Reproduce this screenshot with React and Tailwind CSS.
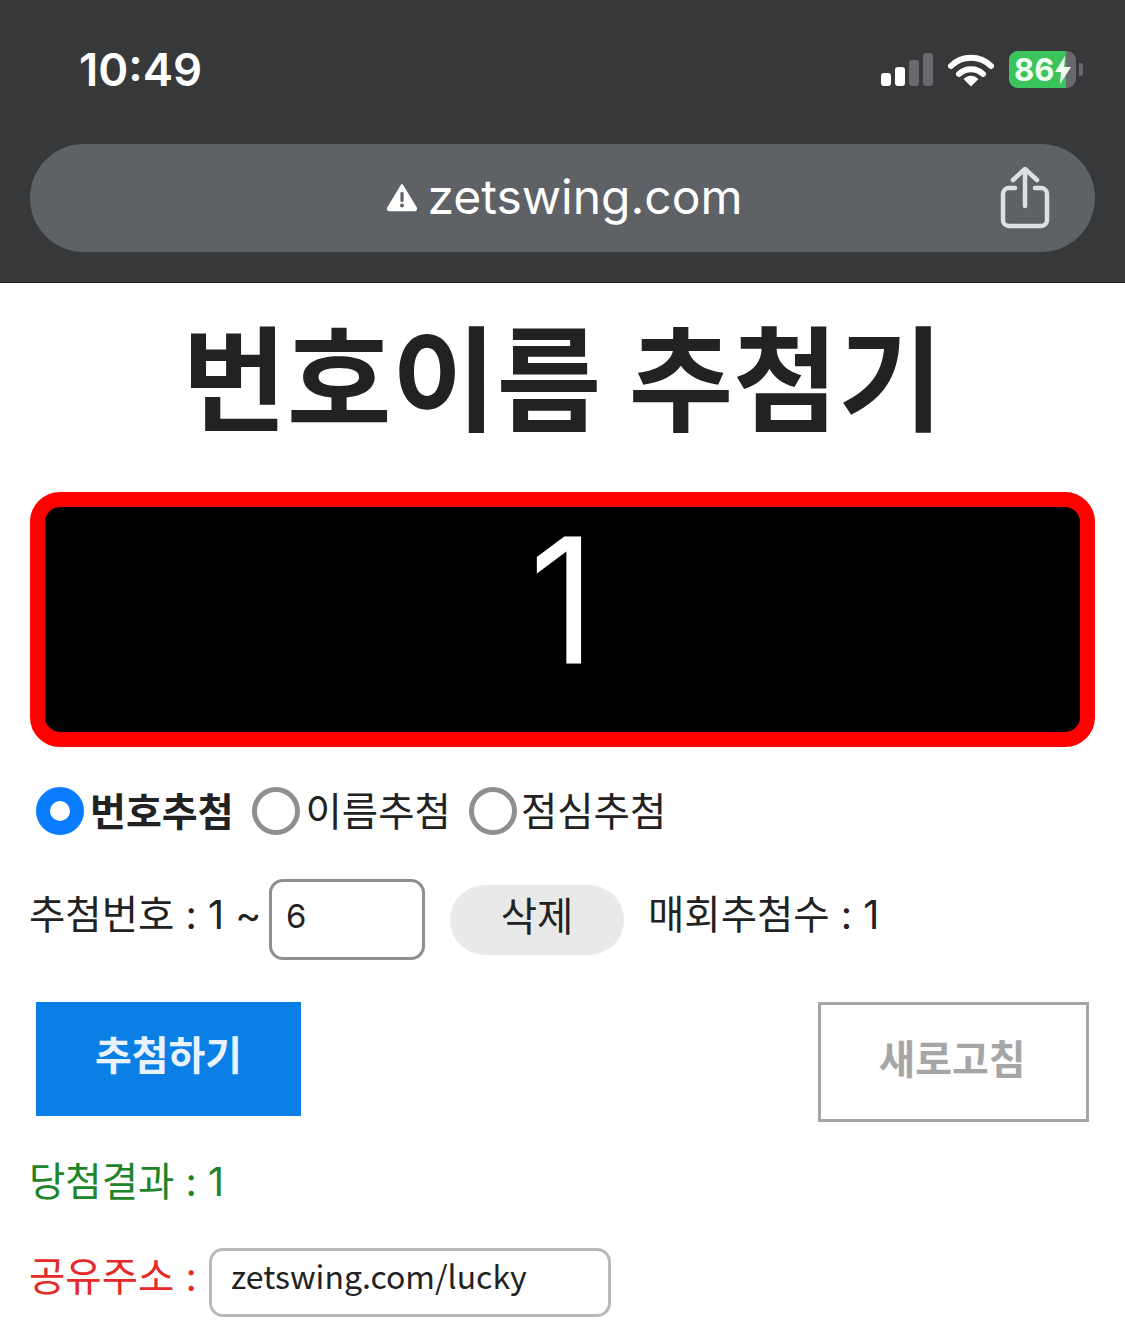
const sans = "font-['Inter','Noto_Sans_CJK_KR',sans-serif]";
const kr = "font-['Noto_Sans_CJK_KR',sans-serif]";

const Signal = () => (
  <svg width="52" height="34" viewBox="0 0 52 34">
    <rect x="0" y="20" width="10" height="13" rx="3" fill="#fff" />
    <rect x="14" y="14" width="10" height="19" rx="3" fill="#fff" />
    <rect x="28" y="7" width="10" height="26" rx="3" fill="#68696c" />
    <rect x="42" y="0" width="10" height="33" rx="3" fill="#68696c" />
  </svg>
);

const Wifi = () => (
  <svg width="46" height="34" viewBox="0 0 46 34" fill="none">
    <path d="M3 13C14 2 32 2 43 13" stroke="#fff" strokeWidth="6" strokeLinecap="round" />
    <path d="M11 21C17.5 14.5 28.5 14.5 35 21" stroke="#fff" strokeWidth="6" strokeLinecap="round" />
    <path d="M15.5 26C20 21.5 26 21.5 30.5 26L23 33.5Z" fill="#fff" />
  </svg>
);

const Battery = () => (
  <div className="flex items-center gap-[3px]">
    <div className="relative flex h-[37px] w-[67px] items-center overflow-hidden rounded-[9px] bg-[#68696c]">
      <div className="absolute inset-y-0 left-0 w-[57px] bg-[#3cc45c]" />
      <span className="relative pl-[5px] font-['Inter',sans-serif] text-[31px] leading-none font-bold text-[#f0fff2]">86</span>
      <svg className="relative" width="18" height="30" viewBox="0 0 18 30">
        <path d="M11 1 1 17h6l-1 12L17 12h-7z" fill="#f0fff2" />
      </svg>
    </div>
    <div className="h-[13px] w-[4px] rounded-r-[3px] bg-[#68696c]" />
  </div>
);

const WarnIcon = () => (
  <svg width="32" height="30" viewBox="0 0 32 30">
    <path d="M16 3 30 26a1.5 1.5 0 0 1-1.3 2.2H3.3A1.5 1.5 0 0 1 2 26Z" fill="#fff" stroke="#fff" strokeWidth="2" strokeLinejoin="round" />
    <rect x="14.4" y="10" width="3.2" height="10" rx="1.4" fill="#5e6165" />
    <circle cx="16" cy="23.6" r="2" fill="#5e6165" />
  </svg>
);

const ShareIcon = () => (
  <svg width="50" height="62" viewBox="0 0 50 62" fill="none" stroke="#dfe0e3" strokeWidth="4.5" strokeLinecap="round" strokeLinejoin="round">
    <path d="M25 39V3M13 13 25 2l12 11" />
    <path d="M15 21H9a6 6 0 0 0-6 6v26a6 6 0 0 0 6 6h32a6 6 0 0 0 6-6V27a6 6 0 0 0-6-6h-6" />
  </svg>
);

const Radio = ({ label, checked, className = "", labelClass = "ml-[6px]" }) => (
  <label className={`flex items-center ${className}`}>
    {checked ? (
      <span className="h-[48px] w-[48px] rounded-full border-[14px] border-[#0a7cff] bg-white" />
    ) : (
      <span className="h-[48px] w-[48px] rounded-full border-[5px] border-[#8f8f8f] bg-white" />
    )}
    <span className={`leading-none text-[#222] ${labelClass} ${checked ? "text-[39px] font-bold" : "pt-[3px] text-[39.5px]"}`}>{label}</span>
  </label>
);

export default function App() {
  return (
    <div className={`h-[1338px] w-[1125px] overflow-hidden bg-white ${sans}`}>
      <div className="h-[283px] border-b border-[#1f1f20] bg-[#37383a] px-[30px]">
        <div className="flex h-[144px] items-start justify-between pt-[44px] pl-[49px] pr-[12px]">
          <span className="text-[45.5px] leading-[52px] font-semibold text-white">10:49</span>
          <div className="flex items-center gap-[15px] pt-[7px]">
            <Signal />
            <Wifi />
            <Battery />
          </div>
        </div>
        <div className="relative flex h-[108px] items-center justify-center rounded-[54px] bg-[#5e6165]">
          <div className="-mt-[2px] flex items-center gap-[9px] pl-[4px]">
            <WarnIcon />
            <span className="text-[48px] leading-none text-white">zetswing.com</span>
          </div>
          <div className="absolute top-[23px] right-[45px]">
            <ShareIcon />
          </div>
        </div>
      </div>

      <div className="px-[30px]">
        <h1 className="pt-[30px] text-center text-[114px] leading-[136px] font-bold text-[#222]">번호이름 추첨기</h1>

        <div className="mt-[43px] flex h-[255px] justify-center rounded-[30px] border-[15px] border-[#ff0000] bg-black">
          <span className="text-[170px] leading-[186px] font-light text-white [-webkit-text-stroke:3px_white]">1</span>
        </div>

        <div className="mt-[40px] flex items-center gap-[20px] pl-[6px]">
          <Radio label="번호추첨" checked className="-mr-[2px]" />
          <Radio label="이름추첨" className="-mr-[2px]" />
          <Radio label="점심추첨" labelClass="ml-[4px]" />
        </div>

        <div className="mt-[44px] flex h-[81px] items-center text-[39.5px] leading-none text-[#222]">
          <span className="-ml-[1px] w-[240px] pb-[8px]">추첨번호 : 1 ~</span>
          <div className="flex h-[81px] w-[156px] items-center rounded-[14px] border-[3px] border-[#8f8f8f] pb-[6px] pl-[14px] text-[33px]">6</div>
          <button className="ml-[25px] h-[70px] w-[174px] rounded-[35px] bg-[#e9e9e9] pb-[4px] text-[39.5px] text-[#222]">삭제</button>
          <span className="ml-[24px] pb-[8px]">매회추첨수 : 1</span>
        </div>

        <div className="mt-[42px] flex items-start justify-between pr-[6px] pl-[6px]">
          <button className="h-[114px] w-[265px] bg-[#0a7fe6] pb-[6px] text-[40px] font-bold text-[#e8f3ff]">추첨하기</button>
          <button className="h-[120px] w-[271px] border-[3px] border-[#a6a6a6] bg-white pr-[3px] pb-[4px] text-[40px] font-bold text-[#a6a6a6]">새로고침</button>
        </div>

        <div className="mt-[37px] -ml-[1px] text-[39.5px] leading-[46px] text-[#1d8428]">당첨결과 : 1</div>

        <div className="mt-[43px] flex h-[69px] items-center">
          <span className="-ml-[1px] w-[180px] pb-[10px] text-[39.5px] leading-none text-[#e52a2a]">공유주소 :</span>
          <div className={`flex h-[69px] w-[402px] items-center rounded-[14px] border-[3px] border-[#b9b9b9] pb-[16px] pl-[19px] text-[32px] text-[#222] ${kr}`}>zetswing.com/lucky</div>
        </div>
      </div>
    </div>
  );
}
